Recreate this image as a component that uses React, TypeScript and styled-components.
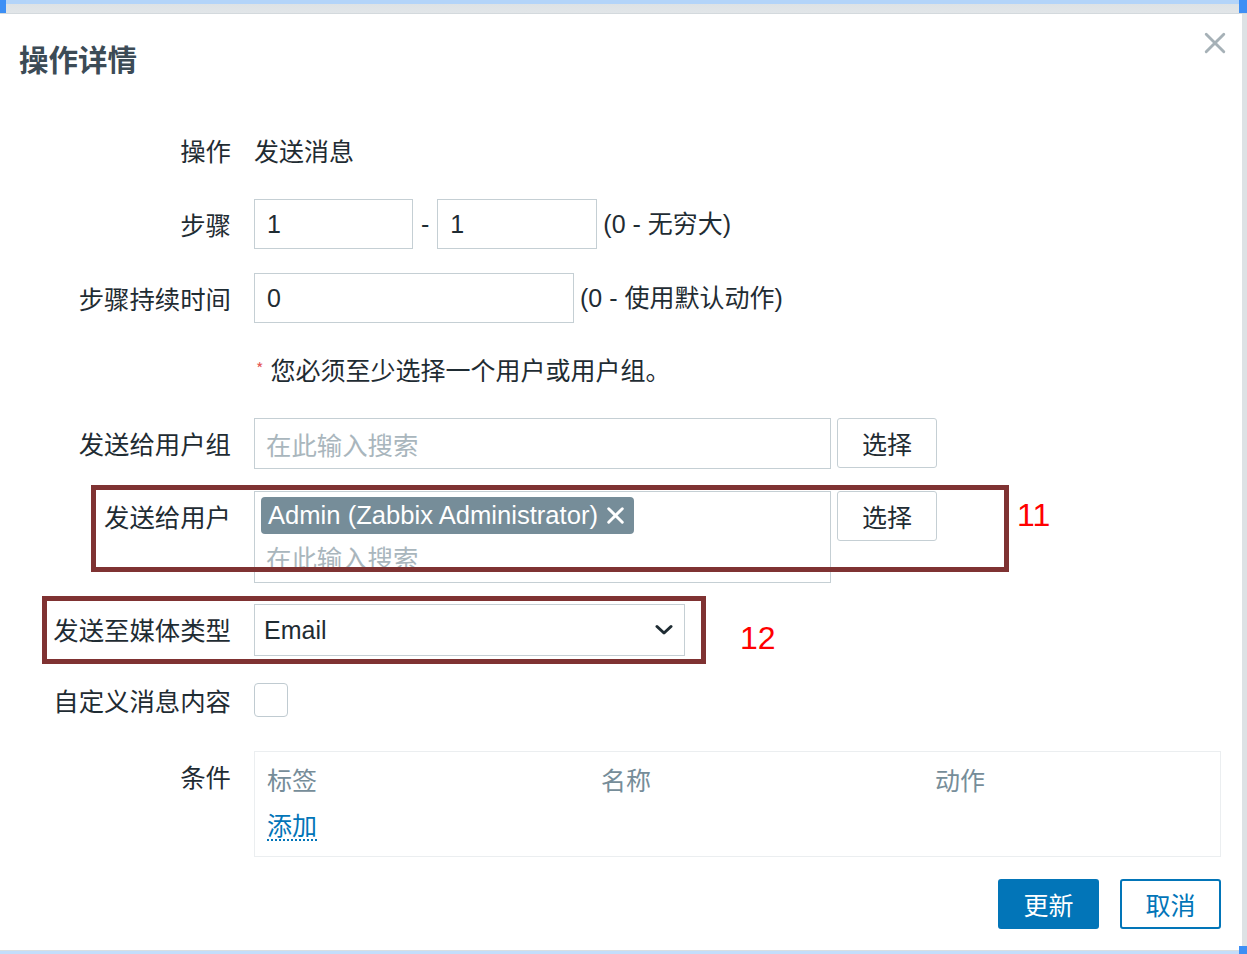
import styled, { createGlobalStyle } from "styled-components";

const GlobalStyle = createGlobalStyle`
  html, body {
    margin: 0;
    padding: 0;
    background: #ffffff;
  }
  body {
    font-family: "Liberation Sans", "Noto Sans CJK SC", sans-serif;
    color: #1f2c33;
  }
  * {
    box-sizing: border-box;
  }
`;

const Frame = styled.div`
  position: relative;
  width: 1247px;
  height: 954px;
  display: flex;
  flex-direction: column;
  overflow: hidden;
`;

const TopBand = styled.div`
  height: 14px;
  flex-shrink: 0;
  background: linear-gradient(
    #b3d4f9 0,
    #b3d4f9 4px,
    #dde2e5 4px,
    #e2e6e9 13px,
    #d3d9dd 13px
  );
`;

const BottomBand = styled.div`
  height: 4px;
  flex-shrink: 0;
  background: linear-gradient(#d9dee1 0, #d9dee1 1px, #c3ddfa 1px);
`;

const Corner = styled.div<{ $side: "left" | "right"; $bottom?: boolean }>`
  position: absolute;
  ${(p) => (p.$side === "left" ? "left: 0; width: 6px;" : "right: 0; width: 8px;")}
  ${(p) => (p.$bottom ? "bottom: 0; height: 8px;" : "top: 0; height: 13px;")}
  background: #3d8ff5;
`;

const Dialog = styled.div`
  position: relative;
  flex: 1;
  display: flex;
  flex-direction: column;
  border-right: 5px solid #dde2e5;
  box-shadow: inset -2px 0 0 #ffffff;
  padding-right: 21px;
`;

const Header = styled.div`
  padding: 29px 0 0 19px;
  height: 111px;
`;

const Title = styled.h1`
  margin: 0;
  font-family: "Noto Sans CJK SC", sans-serif;
  font-size: 29.5px;
  line-height: 30px;
  font-weight: 700;
  color: #3c4b56;
`;

const CloseButton = styled.button`
  position: absolute;
  top: 18px;
  right: 16px;
  width: 22px;
  height: 22px;
  padding: 0;
  border: none;
  background: none;
  display: flex;
`;

const Form = styled.div`
  display: flex;
  flex-direction: column;
  gap: 23px;
`;

const Row = styled.div<{ $shift?: number }>`
  position: relative;
  display: grid;
  grid-template-columns: 231px 1fr;
  column-gap: 23px;
  align-items: start;
  margin-top: ${(p) => p.$shift ?? 0}px;
`;

const Label = styled.div`
  text-align: right;
  font-family: "Noto Sans CJK SC", sans-serif;
  font-size: 25.4px;
  line-height: 50px;
  color: #1f2c33;
  white-space: nowrap;
`;

const Field = styled.div<{ $top?: boolean }>`
  display: flex;
  align-items: ${(p) => (p.$top ? "flex-start" : "center")};
  gap: 6px;
  min-height: 50px;
  font-size: 25px;
`;

const PlainText = styled.span<{ $cjk?: boolean }>`
  font-family: ${(p) =>
    p.$cjk ? '"Noto Sans CJK SC", sans-serif' : '"Liberation Sans", "Noto Sans CJK SC", sans-serif'};
  font-size: 25px;
  line-height: 50px;
  color: #1f2c33;
  white-space: nowrap;
`;

const TextInput = styled.div<{ $width: number }>`
  width: ${(p) => p.$width}px;
  height: 50px;
  border: 1px solid #c5cfd4;
  padding: 0 12px;
  display: flex;
  align-items: center;
  font-size: 25px;
  color: #1f2c33;
`;

const Dash = styled.span`
  font-size: 25px;
  padding: 0 2px;
`;

const Note = styled.div`
  height: 50px;
  display: flex;
  align-items: center;
  padding-left: 2px;
  font-family: "Noto Sans CJK SC", sans-serif;
  font-size: 25px;
  color: #1f2c33;
`;

const Star = styled.span`
  color: #e45959;
  font-size: 16px;
  align-self: flex-start;
  margin-top: 12px;
  margin-right: 7px;
`;

const MultiSelect = styled.div<{ $tall?: boolean }>`
  width: 577px;
  height: ${(p) => (p.$tall ? 92 : 51)}px;
  border: 1px solid #c5cfd4;
  padding: ${(p) => (p.$tall ? "5px 6px" : "0 11px")};
  display: flex;
  flex-direction: column;
  justify-content: ${(p) => (p.$tall ? "flex-start" : "center")};
  gap: 3px;
  overflow: hidden;
`;

const Placeholder = styled.span<{ $indent?: boolean }>`
  font-family: "Noto Sans CJK SC", sans-serif;
  font-size: 25.4px;
  line-height: 40px;
  color: #a9b6bd;
  padding-left: ${(p) => (p.$indent ? 5 : 0)}px;
`;

const Tag = styled.span`
  align-self: flex-start;
  height: 38px;
  background: #768d99;
  color: #ffffff;
  border-radius: 4px;
  padding: 0 10px 0 7px;
  display: flex;
  align-items: center;
  gap: 9px;
  font-size: 25.6px;
  white-space: nowrap;
`;

const SelectButton = styled.button`
  width: 100px;
  height: 50px;
  border: 1px solid #c5cfd4;
  border-radius: 3px;
  background: #ffffff;
  font-family: "Noto Sans CJK SC", sans-serif;
  font-size: 25px;
  color: #1f2c33;
  padding: 0;
`;

const Select = styled.div`
  width: 431px;
  height: 52px;
  border: 1px solid #c5cfd4;
  padding: 0 11px 0 9px;
  display: flex;
  align-items: center;
  justify-content: space-between;
  font-size: 25px;
  color: #1f2c33;
`;

const Checkbox = styled.div`
  width: 34px;
  height: 34px;
  border: 1px solid #c0cbd1;
  border-radius: 4px;
  background: #ffffff;
`;

const ConditionsBox = styled.div`
  border: 1px solid #ebeef0;
  height: 106px;
  padding: 12px 12px 0;
`;

const ConditionsHead = styled.div`
  display: grid;
  grid-template-columns: 334px 334px 1fr;
  font-family: "Noto Sans CJK SC", sans-serif;
  font-size: 25px;
  line-height: 30px;
  color: #768d99;
`;

const AddLink = styled.a`
  display: inline-block;
  margin-top: 15px;
  font-family: "Noto Sans CJK SC", sans-serif;
  font-size: 25px;
  line-height: 30px;
  color: #0275b8;
  text-decoration: none;
  border-bottom: 2px dotted #0275b8;
`;

const Footer = styled.div`
  display: flex;
  justify-content: flex-end;
  gap: 21px;
  margin-top: 22px;
`;

const ActionButton = styled.button<{ $primary?: boolean }>`
  width: 101px;
  height: 50px;
  border-radius: 3px;
  border: 2px solid #0275b8;
  background: ${(p) => (p.$primary ? "#0275b8" : "#ffffff")};
  color: ${(p) => (p.$primary ? "#ffffff" : "#0275b8")};
  font-family: "Noto Sans CJK SC", sans-serif;
  font-size: 25px;
  padding: 0;
`;

const Marker = styled.div<{ $left: number; $top: number; $width: number; $height: number }>`
  position: absolute;
  left: ${(p) => p.$left}px;
  top: ${(p) => p.$top}px;
  width: ${(p) => p.$width}px;
  height: ${(p) => p.$height}px;
  border: 5px solid #7f3232;
  pointer-events: none;
`;

const MarkerNumber = styled.span<{ $left: number; $top: number }>`
  position: absolute;
  left: ${(p) => p.$left}px;
  top: ${(p) => p.$top}px;
  font-family: "Liberation Sans", sans-serif;
  font-size: 32px;
  line-height: 32px;
  color: #ff0000;
`;

function Cross({ size, color, width }: { size: number; color: string; width: number }) {
  return (
    <svg width={size} height={size} viewBox="0 0 20 20">
      <path d="M2 2 L18 18 M18 2 L2 18" stroke={color} strokeWidth={width} strokeLinecap="round" />
    </svg>
  );
}

function Chevron() {
  return (
    <svg width="18" height="12" viewBox="0 0 18 12">
      <path d="M2 2.5 L9 9 L16 2.5" fill="none" stroke="#1f2c33" strokeWidth="3" strokeLinecap="round" strokeLinejoin="round" />
    </svg>
  );
}

export default function App() {
  return (
    <>
      <GlobalStyle />
      <Frame>
        <TopBand />
        <Dialog>
          <Header>
            <Title>操作详情</Title>
          </Header>
          <CloseButton aria-label="关闭">
            <Cross size={22} color="#a6b1b7" width={2.6} />
          </CloseButton>

          <Form>
            <Row>
              <Label>操作</Label>
              <Field>
                <PlainText $cjk>发送消息</PlainText>
              </Field>
            </Row>

            <Row $shift={1}>
              <Label>步骤</Label>
              <Field>
                <TextInput $width={159}>1</TextInput>
                <Dash>-</Dash>
                <TextInput $width={160}>1</TextInput>
                <PlainText>(0 - 无穷大)</PlainText>
              </Field>
            </Row>

            <Row $shift={1}>
              <Label>步骤持续时间</Label>
              <Field>
                <TextInput $width={320}>0</TextInput>
                <PlainText>(0 - 使用默认动作)</PlainText>
              </Field>
            </Row>

            <Row $shift={-2}>
              <div />
              <Note>
                <Star>*</Star>
                您必须至少选择一个用户或用户组。
              </Note>
            </Row>

            <Row $shift={1}>
              <Label>发送给用户组</Label>
              <Field $top>
                <MultiSelect>
                  <Placeholder>在此输入搜索</Placeholder>
                </MultiSelect>
                <SelectButton>选择</SelectButton>
              </Field>
            </Row>

            <Row $shift={-1}>
              <Label>发送给用户</Label>
              <Field $top>
                <MultiSelect $tall>
                  <Tag>
                    Admin (Zabbix Administrator)
                    <Cross size={17} color="#ffffff" width={3.4} />
                  </Tag>
                  <Placeholder $indent>在此输入搜索</Placeholder>
                </MultiSelect>
                <SelectButton>选择</SelectButton>
              </Field>
              <Marker $left={91} $top={-6} $width={918} $height={87} />
              <MarkerNumber $left={1017} $top={8}>11</MarkerNumber>
            </Row>

            <Row $shift={-2}>
              <Label>发送至媒体类型</Label>
              <Field>
                <Select>
                  Email
                  <Chevron />
                </Select>
              </Field>
              <Marker $left={42} $top={-8} $width={664} $height={68} />
              <MarkerNumber $left={740} $top={18}>12</MarkerNumber>
            </Row>

            <Row $shift={-4}>
              <Label>自定义消息内容</Label>
              <Field>
                <Checkbox />
              </Field>
            </Row>

            <Row $shift={3}>
              <Label>条件</Label>
              <ConditionsBox>
                <ConditionsHead>
                  <span>标签</span>
                  <span>名称</span>
                  <span>动作</span>
                </ConditionsHead>
                <AddLink href="#">添加</AddLink>
              </ConditionsBox>
            </Row>
          </Form>

          <Footer>
            <ActionButton $primary>更新</ActionButton>
            <ActionButton>取消</ActionButton>
          </Footer>
        </Dialog>
        <BottomBand />
        <Corner $side="left" />
        <Corner $side="right" />
        <Corner $side="right" $bottom />
      </Frame>
    </>
  );
}
